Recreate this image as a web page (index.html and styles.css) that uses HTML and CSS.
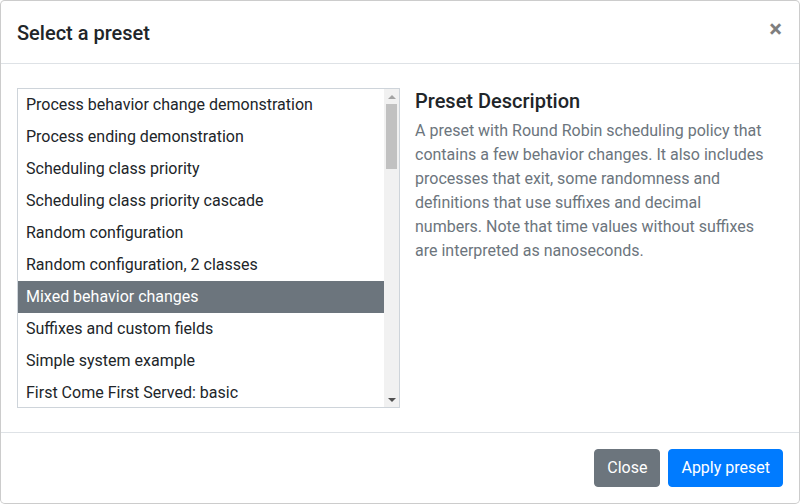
FILE: index.html
```html
<!DOCTYPE html>
<html lang="en">
<head>
<meta charset="utf-8">
<title>Select a preset</title>
<link rel="stylesheet" href="styles.css">
</head>
<body>
<div class="modal-content">
  <div class="modal-header">
    <h5 class="modal-title">Select a preset</h5>
    <button class="close" type="button" aria-label="Close">×</button>
  </div>
  <div class="modal-body">
    <div class="list-col">
      <div class="preset-list">
        <div class="options" role="listbox">
          <div class="option">Process behavior change demonstration</div>
          <div class="option">Process ending demonstration</div>
          <div class="option">Scheduling class priority</div>
          <div class="option">Scheduling class priority cascade</div>
          <div class="option">Random configuration</div>
          <div class="option">Random configuration, 2 classes</div>
          <div class="option selected">Mixed behavior changes</div>
          <div class="option">Suffixes and custom fields</div>
          <div class="option">Simple system example</div>
          <div class="option">First Come First Served: basic</div>
          <div class="option">First Come First Served: convoy effect</div>
          <div class="option">First Come First Served: IO bursts</div>
          <div class="option">Shortest Job First: basic</div>
          <div class="option">Shortest Job First: starvation</div>
          <div class="option">Shortest Remaining Time First: basic</div>
          <div class="option">Round Robin: basic</div>
          <div class="option">Round Robin: small quantum</div>
          <div class="option">Priority: basic</div>
          <div class="option">Priority: preemptive</div>
          <div class="option">Multilevel queue: basic</div>
          <div class="option">Multilevel feedback queue: basic</div>
        </div>
        <div class="scrollbar" aria-hidden="true">
          <div class="sb-button"><span class="arrow-up"></span></div>
          <div class="sb-track"><div class="sb-thumb"></div></div>
          <div class="sb-button"><span class="arrow-down"></span></div>
        </div>
      </div>
    </div>
    <div class="desc-col">
      <h5 class="desc-title">Preset Description</h5>
      <p class="desc-text">A preset with Round Robin scheduling policy that contains a few behavior changes. It also includes processes that exit, some randomness and definitions that use suffixes and decimal numbers. Note that time values without suffixes are interpreted as nanoseconds.</p>
    </div>
  </div>
  <div class="modal-footer">
    <button class="btn btn-secondary" type="button">Close</button>
    <button class="btn btn-primary" type="button">Apply preset</button>
  </div>
</div>
</body>
</html>
```

FILE: styles.css
```css
* {
  box-sizing: border-box;
}

html, body {
  margin: 0;
  padding: 0;
  background: #fff;
}

body {
  font-family: Roboto, "Liberation Sans", Arial, sans-serif;
  font-size: 16px;
  line-height: 1.5;
  color: #212529;
  width: 800px;
  height: 504px;
  overflow: hidden;
}

.modal-content {
  width: 800px;
  height: 504px;
  border: 1px solid rgba(0, 0, 0, 0.2);
  border-radius: 4.8px;
  background: #fff;
  display: flex;
  flex-direction: column;
}

.modal-header {
  display: flex;
  align-items: flex-start;
  justify-content: space-between;
  padding: 17px 16px 15px;
  border-bottom: 1px solid #dee2e6;
}

.modal-title {
  margin: 0;
  font-size: 20px;
  font-weight: 500;
  line-height: 1.5;
}

.close {
  padding: 16px;
  margin: -17px -15px -15px auto;
  background: transparent;
  border: 0;
  font-family: inherit;
  font-size: 24px;
  font-weight: 700;
  line-height: 1;
  color: #000;
  opacity: 0.5;
  text-shadow: 0 1px 0 #fff;
  cursor: pointer;
}

.modal-body {
  flex: 1;
  display: flex;
  gap: 15px;
  padding: 24px 16px;
}

.list-col {
  flex: 0 0 383px;
}

.desc-col {
  flex: 1;
  padding: 1px 15px 0 0;
}

.preset-list {
  display: flex;
  height: 320px;
  border: 1px solid #ced4da;
  background: #fff;
}

.options {
  flex: 1;
  overflow: hidden;
}

.option {
  height: 32px;
  padding: 4px 8px;
  line-height: 24px;
  white-space: nowrap;
  color: #212529;
}

.option.selected {
  background: #6c757d;
  color: #fff;
}

.scrollbar {
  flex: 0 0 15px;
  display: flex;
  flex-direction: column;
  background: #f1f1f1;
}

.sb-button {
  flex: 0 0 15px;
  display: flex;
  align-items: center;
  justify-content: center;
}

.arrow-up {
  width: 0;
  height: 0;
  border-left: 4px solid transparent;
  border-right: 4px solid transparent;
  border-bottom: 4px solid #a3a3a3;
}

.arrow-down {
  width: 0;
  height: 0;
  border-left: 4px solid transparent;
  border-right: 4px solid transparent;
  border-top: 4px solid #505050;
}

.sb-track {
  flex: 1;
  padding: 0 2px;
}

.sb-thumb {
  height: 65px;
  background: #c1c1c1;
}

.desc-title {
  margin: 0 0 6px;
  font-size: 20px;
  font-weight: 500;
  line-height: 1.2;
}

.desc-text {
  margin: 0;
  color: #6c757d;
}

.modal-footer {
  display: flex;
  align-items: center;
  justify-content: flex-end;
  padding: 12px;
  border-top: 1px solid #dee2e6;
}

.btn {
  margin: 4px;
  padding: 6px 12px;
  font-family: inherit;
  font-size: 16px;
  line-height: 1.5;
  border: 1px solid transparent;
  border-radius: 4px;
  color: #fff;
  cursor: pointer;
}

.btn-secondary {
  background: #6c757d;
  border-color: #6c757d;
}

.btn-primary {
  background: #007bff;
  border-color: #007bff;
}
```
